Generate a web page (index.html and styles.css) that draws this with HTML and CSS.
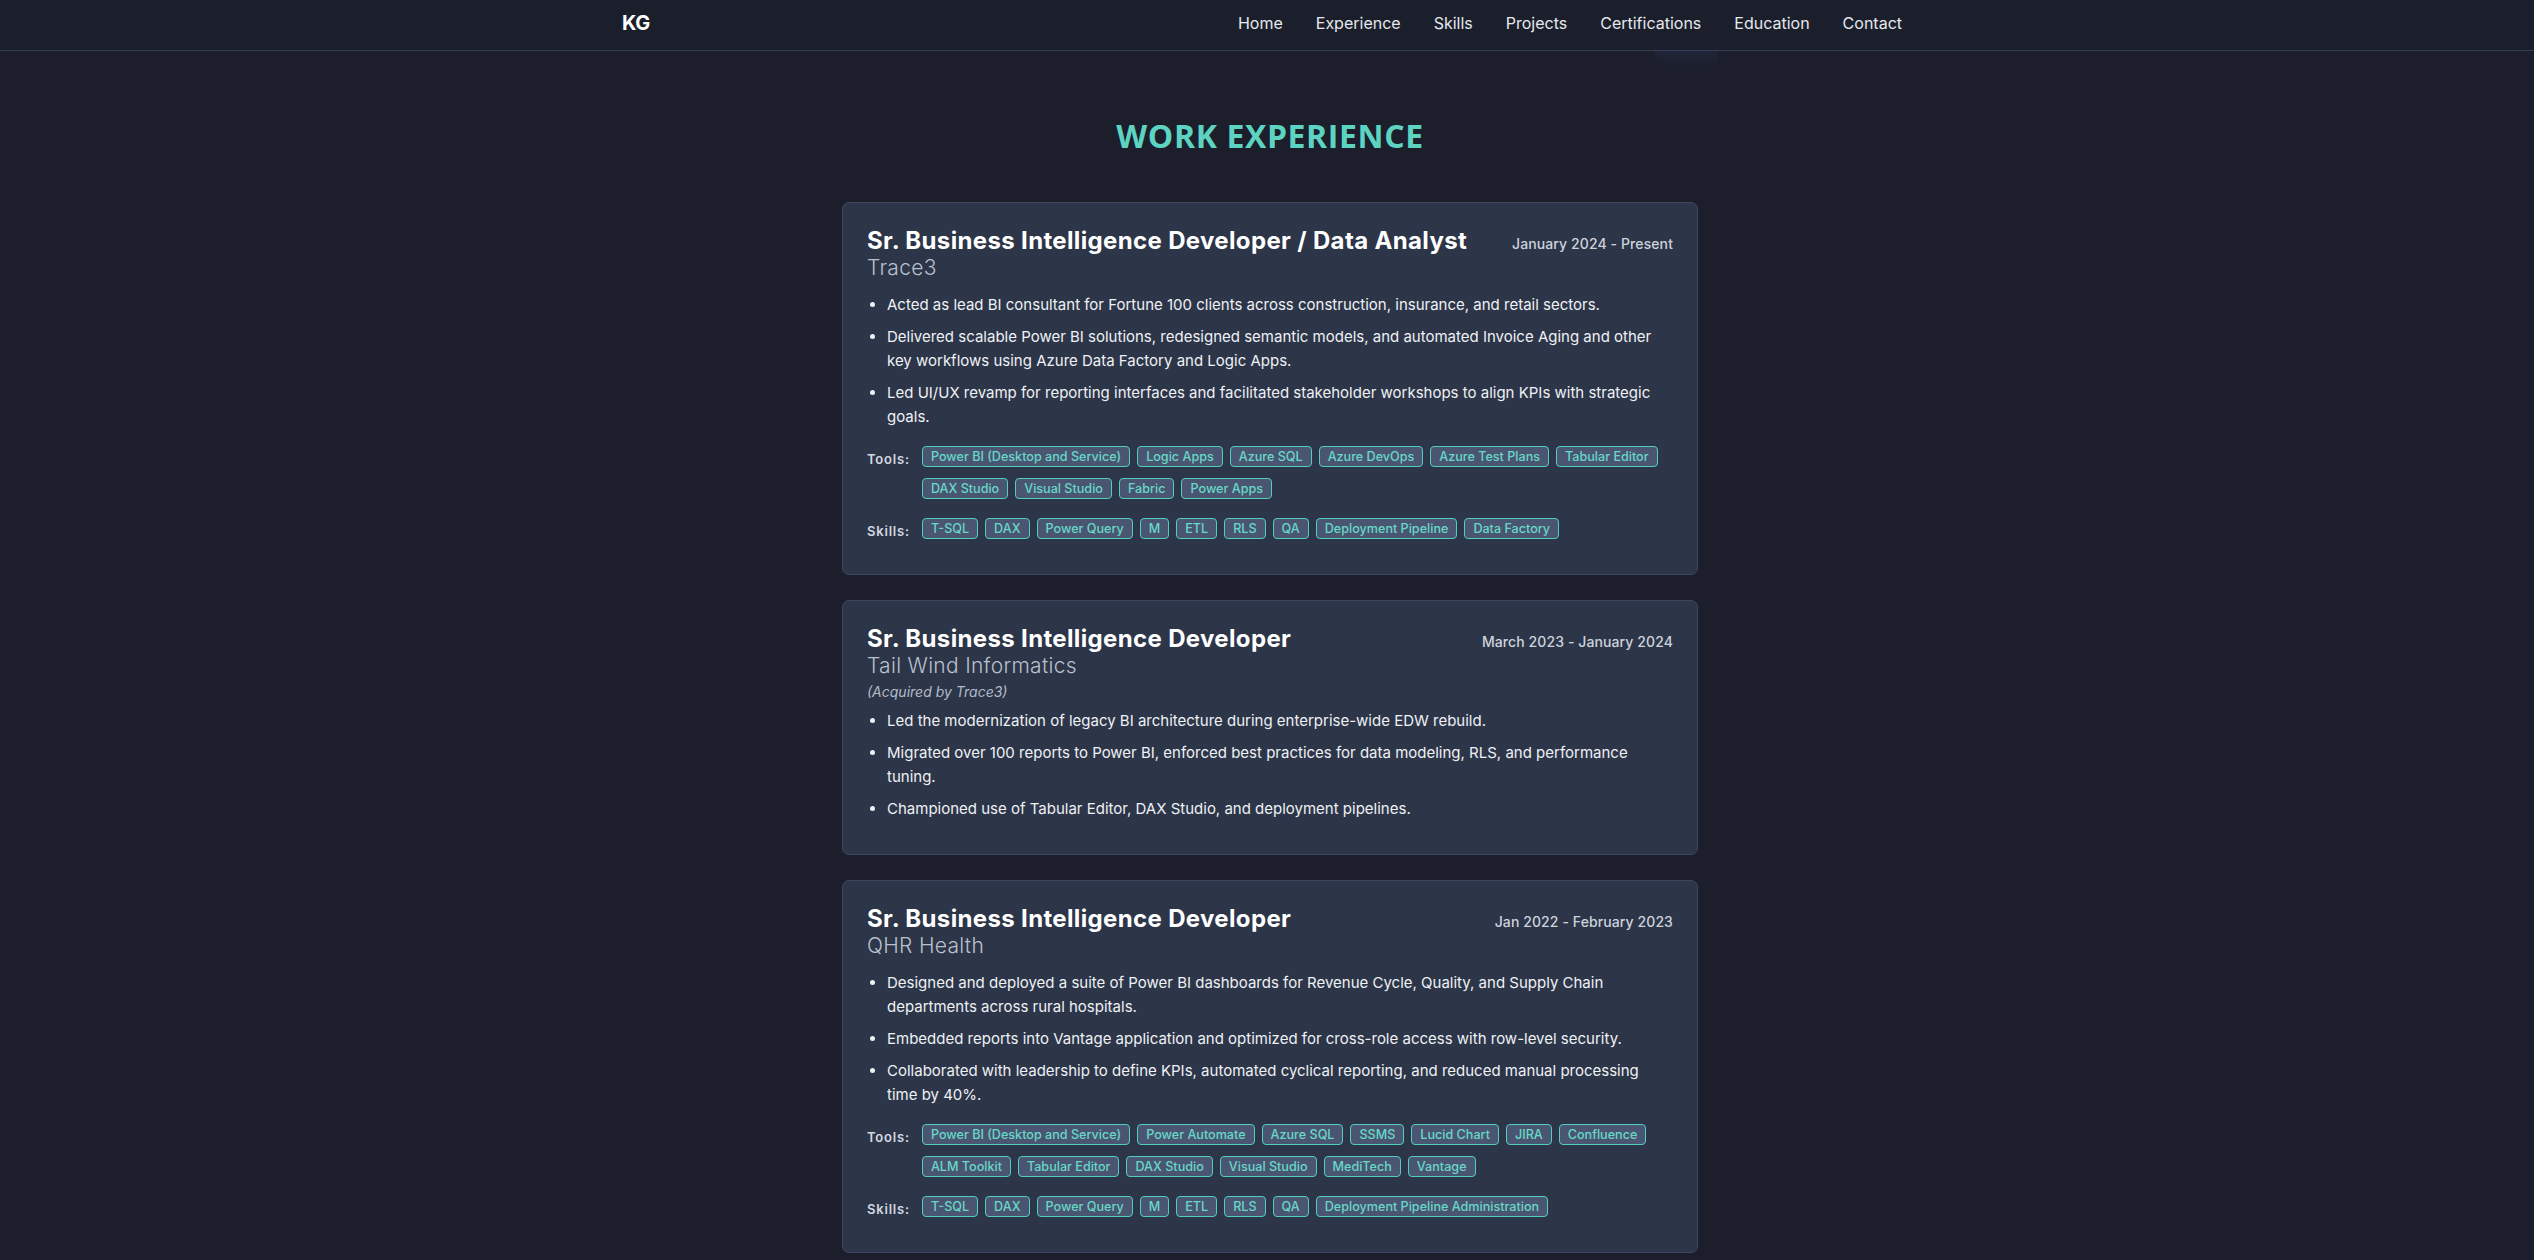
FILE: index.html
```html
<!DOCTYPE html>
<html lang="en">
<head>
<meta charset="utf-8">
<title>KG - Work Experience</title>
<link rel="stylesheet" href="styles.css">
</head>
<body>
<nav class="nav">
  <div class="nav-inner">
    <a class="brand" href="#">KG</a>
    <ul class="nav-links">
      <li><a href="#">Home</a></li>
      <li><a href="#">Experience</a></li>
      <li><a href="#">Skills</a></li>
      <li><a href="#">Projects</a></li>
      <li><a href="#">Certifications</a></li>
      <li><a href="#">Education</a></li>
      <li><a href="#">Contact</a></li>
    </ul>
  </div>
  <span class="nav-glow" aria-hidden="true"></span>
</nav>
<main class="section">
  <h2 class="section-title">WORK EXPERIENCE</h2>

  <article class="card">
    <div class="card-head">
      <h3 class="role">Sr. Business Intelligence Developer / Data Analyst</h3>
      <span class="date">January 2024 - Present</span>
    </div>
    <div class="company">Trace3</div>
    <ul class="bullets">
      <li>Acted as lead BI consultant for Fortune 100 clients across construction, insurance, and retail sectors.</li>
      <li>Delivered scalable Power BI solutions, redesigned semantic models, and automated Invoice Aging and other key workflows using Azure Data Factory and Logic Apps.</li>
      <li>Led UI/UX revamp for reporting interfaces and facilitated stakeholder workshops to align KPIs with strategic goals.</li>
    </ul>
    <div class="tag-row tools">
      <span class="tag-label">Tools:</span>
      <div class="tags">
        <span class="tag">Power BI (Desktop and Service)</span>
        <span class="tag">Logic Apps</span>
        <span class="tag">Azure SQL</span>
        <span class="tag">Azure DevOps</span>
        <span class="tag">Azure Test Plans</span>
        <span class="tag">Tabular Editor</span>
        <span class="tag">DAX Studio</span>
        <span class="tag">Visual Studio</span>
        <span class="tag">Fabric</span>
        <span class="tag">Power Apps</span>
      </div>
    </div>
    <div class="tag-row skills">
      <span class="tag-label">Skills:</span>
      <div class="tags">
        <span class="tag">T-SQL</span>
        <span class="tag">DAX</span>
        <span class="tag">Power Query</span>
        <span class="tag">M</span>
        <span class="tag">ETL</span>
        <span class="tag">RLS</span>
        <span class="tag">QA</span>
        <span class="tag">Deployment Pipeline</span>
        <span class="tag">Data Factory</span>
      </div>
    </div>
  </article>

  <article class="card">
    <div class="card-head">
      <h3 class="role">Sr. Business Intelligence Developer</h3>
      <span class="date">March 2023 - January 2024</span>
    </div>
    <div class="company">Tail Wind Informatics</div>
    <div class="note">(Acquired by Trace3)</div>
    <ul class="bullets">
      <li>Led the modernization of legacy BI architecture during enterprise-wide EDW rebuild.</li>
      <li>Migrated over 100 reports to Power BI, enforced best practices for data modeling, RLS, and performance tuning.</li>
      <li>Championed use of Tabular Editor, DAX Studio, and deployment pipelines.</li>
    </ul>
  </article>

  <article class="card">
    <div class="card-head">
      <h3 class="role">Sr. Business Intelligence Developer</h3>
      <span class="date">Jan 2022 - February 2023</span>
    </div>
    <div class="company">QHR Health</div>
    <ul class="bullets">
      <li>Designed and deployed a suite of Power BI dashboards for Revenue Cycle, Quality, and Supply Chain departments across rural hospitals.</li>
      <li>Embedded reports into Vantage application and optimized for cross-role access with row-level security.</li>
      <li>Collaborated with leadership to define KPIs, automated cyclical reporting, and reduced manual processing time by 40%.</li>
    </ul>
    <div class="tag-row tools">
      <span class="tag-label">Tools:</span>
      <div class="tags">
        <span class="tag">Power BI (Desktop and Service)</span>
        <span class="tag">Power Automate</span>
        <span class="tag">Azure SQL</span>
        <span class="tag">SSMS</span>
        <span class="tag">Lucid Chart</span>
        <span class="tag">JIRA</span>
        <span class="tag">Confluence</span>
        <span class="tag">ALM Toolkit</span>
        <span class="tag">Tabular Editor</span>
        <span class="tag">DAX Studio</span>
        <span class="tag">Visual Studio</span>
        <span class="tag">MediTech</span>
        <span class="tag">Vantage</span>
      </div>
    </div>
    <div class="tag-row skills">
      <span class="tag-label">Skills:</span>
      <div class="tags">
        <span class="tag">T-SQL</span>
        <span class="tag">DAX</span>
        <span class="tag">Power Query</span>
        <span class="tag">M</span>
        <span class="tag">ETL</span>
        <span class="tag">RLS</span>
        <span class="tag">QA</span>
        <span class="tag">Deployment Pipeline Administration</span>
      </div>
    </div>
  </article>
</main>
</body>
</html>
```

FILE: styles.css
```css
* { box-sizing: border-box; }

html, body {
  margin: 0;
  padding: 0;
  background: #1c1f2b;
}

body {
  font-family: Inter, "Liberation Sans", sans-serif;
  color: #eef1f5;
}

.nav {
  position: relative;
  height: 51px;
  background: #1b1f2b;
  border-bottom: 1px solid #353f58;
  padding-right: 10px;
}

.nav-glow {
  position: absolute;
  top: 51px;
  left: calc(50% + 387px);
  width: 64px;
  height: 16px;
  background: linear-gradient(to bottom, #1f2438, rgba(31, 36, 56, 0));
  clip-path: polygon(0 0, 100% 0, 100% 100%, 5px 100%);
  pointer-events: none;
}

.nav-inner {
  max-width: 1280px;
  height: 50px;
  margin: 0 auto;
  padding-bottom: 5px;
  display: flex;
  align-items: center;
  justify-content: space-between;
}

.brand {
  color: #ffffff;
  font-weight: 700;
  font-size: 20px;
  text-decoration: none;
  letter-spacing: -0.3px;
}

.nav-links {
  list-style: none;
  margin: 0;
  padding: 0;
  display: flex;
  gap: 33px;
}

.nav-links a {
  color: #e5e8ee;
  text-decoration: none;
  font-size: 16px;
}

.section {
  padding: 66px 0 40px 6px;
}

.section-title {
  margin: 0 0 47px;
  text-align: center;
  font-family: "Open Sans", Inter, sans-serif;
  font-weight: 700;
  font-size: 32px;
  letter-spacing: 0.6px;
  color: #5dd3c2;
  line-height: 1.2;
}

.card {
  max-width: 856px;
  margin: 0 auto 25px;
  background: #2d3548;
  border: 1px solid #3e4861;
  border-radius: 7px;
  padding: 22px 24px 24px;
}

.card-head {
  display: flex;
  justify-content: space-between;
  align-items: baseline;
}

.role {
  margin: 0;
  font-family: Inter, sans-serif;
  font-weight: 700;
  font-size: 24px;
  line-height: 32px;
  color: #ffffff;
  letter-spacing: 0.35px;
}

.date {
  font-size: 14px;
  font-weight: 500;
  color: #cdd3dd;
  letter-spacing: 0.1px;
}

.company {
  font-size: 21px;
  font-weight: 300;
  color: #b9c1cd;
  line-height: 22px;
  letter-spacing: 0.3px;
}

.note {
  font-size: 14px;
  font-style: italic;
  color: #b3bcc9;
  margin-top: 6px;
}

.bullets {
  margin: 14px 0 9px;
  padding-left: 20px;
}

.note + .bullets {
  margin-top: 9px;
}

.bullets li {
  font-size: 15px;
  line-height: 24px;
  margin-bottom: 8px;
}

.bullets li:last-child {
  margin-bottom: 0;
}

.tag-row {
  display: flex;
  align-items: flex-start;
}

.tag-row.tools {
  margin-top: 17px;
}

.tag-row.skills {
  margin-top: 19px;
  margin-bottom: 6px;
}

.tag-label {
  font-size: 13px;
  font-weight: 600;
  color: #d3d8e0;
  line-height: 26px;
  margin-right: 12px;
  letter-spacing: 0.8px;
  flex-shrink: 0;
}

.tags {
  display: flex;
  flex-wrap: wrap;
  gap: 11px 7px;
}

.tag {
  display: inline-block;
  font-size: 12.6px;
  font-weight: 500;
  line-height: 15px;
  padding: 2px 8px;
  color: #67d8c8;
  background: #4a5671;
  border: 1px solid #4fcfbf;
  border-radius: 4px;
}
```
